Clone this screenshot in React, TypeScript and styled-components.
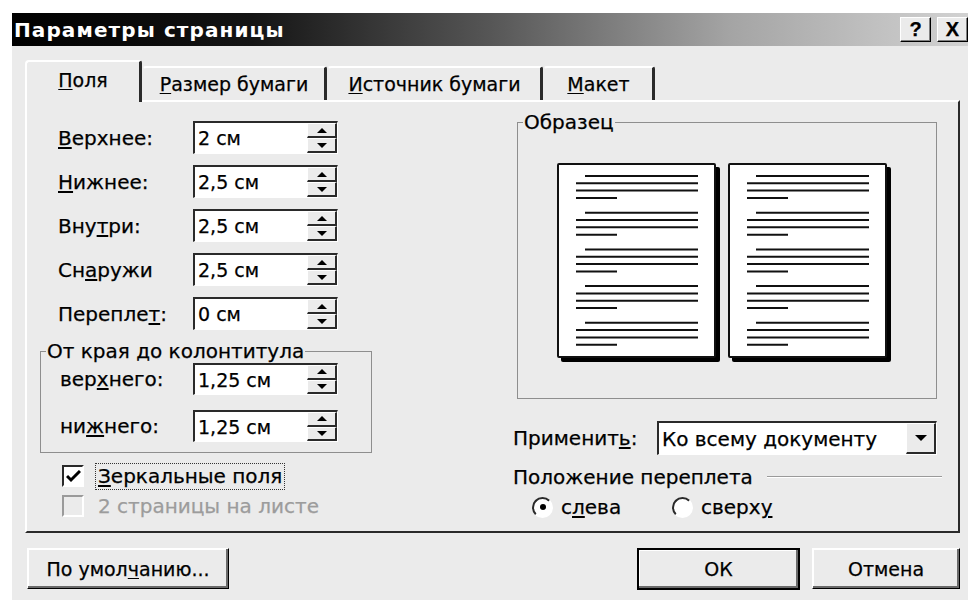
import React from "react";
import styled, { createGlobalStyle } from "styled-components";

const GlobalStyle = createGlobalStyle`
  html, body {
    margin: 0;
    padding: 0;
    background: #fff;
  }
  body {
    font-family: "DejaVu Sans", "Liberation Sans", sans-serif;
    color: #000;
    -webkit-text-stroke: 0.25px currentColor;
  }
  * {
    box-sizing: border-box;
  }
`;

const FACE = "#ebebeb";
const DARK = "#2a2a2a";

// one paragraph = 4 lines: indented first line, two full, one short
const paragraphs = [0, 1, 2, 3, 4];

function PageSheet() {
  return (
    <Page>
      <svg width="155" height="191" viewBox="0 0 155 191">
        {paragraphs.map((p) => {
          const y = 11 + p * 36.7;
          return (
            <g key={p} stroke="#111" strokeWidth="2">
              <line x1="26" y1={y} x2="139" y2={y} />
              <line x1="17" y1={y + 7.3} x2="139" y2={y + 7.3} />
              <line x1="17" y1={y + 14.6} x2="139" y2={y + 14.6} />
              <line x1="17" y1={y + 22} x2="58" y2={y + 22} />
            </g>
          );
        })}
      </svg>
    </Page>
  );
}

function Spin({ value, height = 33 }: { value: string; height?: number }) {
  return (
    <SpinBox style={{ height }}>
      <SpinValue>{value}</SpinValue>
      <SpinButtons>
        <SpinBtn>
          <ArrowUp />
        </SpinBtn>
        <SpinBtn>
          <ArrowDown />
        </SpinBtn>
      </SpinButtons>
    </SpinBox>
  );
}

function Field({ label, value }: { label: React.ReactNode; value: string }) {
  return (
    <Row>
      <Label>{label}</Label>
      <Spin value={value} />
    </Row>
  );
}

export default function App() {
  return (
    <>
      <GlobalStyle />
      <Window>
        <TitleBar>
          <Title>Параметры страницы</Title>
          <CaptionButtons>
            <CaptionButton>?</CaptionButton>
            <CaptionButton>X</CaptionButton>
          </CaptionButtons>
        </TitleBar>

        <Body>
          <Tabs>
            <Tab $active $width={117}>
              <U>П</U>оля
            </Tab>
            <Tab $width={185}>
              <U>Р</U>азмер бумаги
            </Tab>
            <Tab $width={216}>
              <U>И</U>сточник бумаги
            </Tab>
            <Tab $width={112}>
              <U>М</U>акет
            </Tab>
          </Tabs>

          <Panel>
            <LeftCol>
              <FieldList>
                <Field label={<><U>В</U>ерхнее:</>} value="2 см" />
                <Field label={<><U>Н</U>ижнее:</>} value="2,5 см" />
                <Field label={<>Вну<U>т</U>ри:</>} value="2,5 см" />
                <Field label={<>Сн<U>а</U>ружи</>} value="2,5 см" />
                <Field label={<>Перепле<U>т</U>:</>} value="0 см" />
              </FieldList>

              <Group>
                <Legend>От края до колонтитула</Legend>
                <GroupRows>
                  <GroupRow>
                    <Label $width={133}>
                      вер<U>х</U>него:
                    </Label>
                    <Spin value="1,25 см" height={32} />
                  </GroupRow>
                  <GroupRow>
                    <Label $width={133}>
                      ни<U>ж</U>него:
                    </Label>
                    <Spin value="1,25 см" height={32} />
                  </GroupRow>
                </GroupRows>
              </Group>

              <Checks>
                <CheckRow>
                  <CheckBox>
                    <svg width="15" height="13" viewBox="0 0 15 13">
                      <path d="M1 6 L5 10 L14 1" fill="none" stroke="#000" strokeWidth="3" />
                    </svg>
                  </CheckBox>
                  <FocusLabel>
                    <U>З</U>еркальные поля
                  </FocusLabel>
                </CheckRow>
                <CheckRow $disabled>
                  <CheckBox $disabled />
                  <CheckText>2 страницы на листе</CheckText>
                </CheckRow>
              </Checks>
            </LeftCol>

            <RightCol>
              <SampleGroup>
                <Legend>Образец</Legend>
                <Pages>
                  <PageSheet />
                  <PageSheet />
                </Pages>
              </SampleGroup>

              <ApplyRow>
                <Label $width={144}>
                  Применит<U>ь</U>:
                </Label>
                <Combo>
                  <ComboText>Ко всему документу</ComboText>
                  <ComboButton>
                    <ArrowDown $size={6} />
                  </ComboButton>
                </Combo>
              </ApplyRow>

              <SectionHead>
                <span>Положение переплета</span>
                <Rule />
              </SectionHead>

              <Radios>
                <RadioItem $width={140}>
                  <Radio $checked />
                  <span>
                    с<U>л</U>ева
                  </span>
                </RadioItem>
                <RadioItem>
                  <Radio />
                  <span>
                    сверх<U>у</U>
                  </span>
                </RadioItem>
              </Radios>
            </RightCol>
          </Panel>

          <Footer>
            <Button $width={202}>
              По умол<U>ч</U>анию...
            </Button>
            <Spacer />
            <Button $width={163} $default>
              ОК
            </Button>
            <Button $width={148}>Отмена</Button>
          </Footer>
        </Body>
      </Window>
    </>
  );
}

// Styled Components
const Window = styled.div`
  margin: 13px 0 0 12px;
  width: 956px;
  height: 587px;
  background: ${FACE};
  display: flex;
  flex-direction: column;
  overflow: hidden;
`;

const TitleBar = styled.div`
  height: 33px;
  flex: none;
  display: flex;
  align-items: center;
  justify-content: space-between;
  padding-left: 2px;
  background: linear-gradient(to right, #000 0%, #141414 25%, #565656 50%, #a4a4a4 75%, #d2d2d2 100%);
`;

const Title = styled.span`
  color: #fff;
  font-weight: bold;
  font-size: 20px;
  letter-spacing: 1.1px;
  -webkit-text-stroke: 0;
`;

const CaptionButtons = styled.div`
  display: flex;
  gap: 6px;
`;

const CaptionButton = styled.div`
  width: 31px;
  height: 25px;
  background: ${FACE};
  border: 1px solid;
  border-color: #fff #000 #000 #fff;
  box-shadow: inset -1px -1px #808080;
  font-family: "Liberation Sans", sans-serif;
  font-weight: bold;
  font-size: 20px;
  line-height: 22px;
  text-align: center;
`;

const Body = styled.div`
  flex: 1;
  display: flex;
  flex-direction: column;
  padding: 14px 8px 0 13px;
`;

const Tabs = styled.div`
  display: flex;
  align-items: flex-end;
  height: 42px;
  margin-bottom: -2px;
  position: relative;
  z-index: 1;
`;

const Tab = styled.div<{ $active?: boolean; $width: number }>`
  width: ${(p) => p.$width}px;
  height: ${(p) => (p.$active ? 42 : 34)}px;
  margin-bottom: ${(p) => (p.$active ? 0 : 2)}px;
  padding-bottom: ${(p) => (p.$active ? 4 : 0)}px;
  display: flex;
  align-items: center;
  justify-content: center;
  background: ${FACE};
  border-top: 2px solid #fff;
  border-left: 2px solid ${(p) => (p.$active ? "#fff" : "transparent")};
  border-right: 3px solid ${DARK};
  border-radius: 4px 3px 0 0;
  font-size: 19px;
  white-space: nowrap;
`;

const U = styled.span`
  text-decoration: underline;
  text-underline-offset: 2px;
`;

const Panel = styled.div`
  height: 433px;
  border: 2px solid;
  border-color: #fff ${DARK} ${DARK} #fff;
  display: grid;
  grid-template-columns: 484px 1fr;
`;

const LeftCol = styled.div`
  padding: 19px 0 0 13px;
  display: flex;
  flex-direction: column;
`;

const FieldList = styled.div`
  display: flex;
  flex-direction: column;
  gap: 11px;
  padding-left: 18px;
`;

const Row = styled.div`
  display: flex;
  align-items: center;
`;

const Label = styled.div<{ $width?: number }>`
  width: ${(p) => p.$width ?? 135}px;
  flex: none;
  font-size: 20px;
  white-space: nowrap;
`;

const SpinBox = styled.div`
  width: 145px;
  display: flex;
  align-items: stretch;
  background: #fff;
  border-top: 2px solid ${DARK};
  border-left: 2px solid ${DARK};
  border-right: 1px solid #fff;
  border-bottom: 1px solid #fff;
`;

const SpinValue = styled.div`
  flex: 1;
  padding-left: 3px;
  display: flex;
  align-items: center;
  font-size: 19px;
  white-space: nowrap;
`;

const SpinButtons = styled.div`
  width: 30px;
  display: flex;
  flex-direction: column;
`;

const SpinBtn = styled.div`
  flex: 1;
  display: flex;
  align-items: center;
  justify-content: center;
  background: ${FACE};
  border: 1px solid;
  border-color: #fff ${DARK} ${DARK} #fff;
  border-bottom-width: 2px;
  border-right-width: 2px;
`;

const ArrowUp = styled.span`
  width: 0;
  height: 0;
  border-left: 5px solid transparent;
  border-right: 5px solid transparent;
  border-bottom: 5px solid #000;
`;

const ArrowDown = styled.span<{ $size?: number }>`
  width: 0;
  height: 0;
  border-left: ${(p) => p.$size ?? 5}px solid transparent;
  border-right: ${(p) => p.$size ?? 5}px solid transparent;
  border-top: ${(p) => p.$size ?? 5}px solid #000;
`;

const Group = styled.fieldset`
  margin: 10px 0 0 0;
  width: 332px;
  padding: 1px 0 10px 0;
  border: 1px solid #8e8e8e;
  min-width: 0;
`;

const Legend = styled.legend`
  font-size: 20px;
  line-height: 22px;
  padding: 0 1px;
  margin-left: 5px;
  white-space: nowrap;
`;

const GroupRows = styled.div`
  display: flex;
  flex-direction: column;
  gap: 15px;
  padding-left: 19px;
`;

const GroupRow = styled.div`
  display: flex;
  align-items: center;
`;

const Checks = styled.div`
  margin-top: 11px;
  padding-left: 22px;
  display: flex;
  flex-direction: column;
  gap: 6px;
`;

const CheckRow = styled.div<{ $disabled?: boolean }>`
  display: flex;
  align-items: center;
  height: 24px;
  gap: 11px;
  color: ${(p) => (p.$disabled ? "#9c9c9c" : "#000")};
`;

const CheckBox = styled.div<{ $disabled?: boolean }>`
  width: 22px;
  height: 22px;
  flex: none;
  display: flex;
  align-items: center;
  justify-content: center;
  background: ${(p) => (p.$disabled ? FACE : "#fff")};
  border: 2px solid;
  border-color: ${(p) => (p.$disabled ? "#9a9a9a" : DARK)} #fff #fff
    ${(p) => (p.$disabled ? "#9a9a9a" : DARK)};
`;

const FocusLabel = styled.span`
  font-size: 20px;
  padding: 0 2px;
  border: 1px dotted #333;
  line-height: 25px;
`;

const CheckText = styled.span`
  font-size: 20px;
  padding: 0 3px;
`;

const RightCol = styled.div`
  display: flex;
  flex-direction: column;
  padding: 9px 21px 0 0;
`;

const SampleGroup = styled.fieldset`
  margin: 0 0 0 6px;
  height: 288px;
  padding: 30px 0 0 0;
  border: 1px solid #8e8e8e;
  min-width: 0;
`;

const Pages = styled.div`
  display: flex;
  justify-content: center;
  gap: 12px;
  padding-right: 10px;
`;

const Page = styled.div`
  width: 159px;
  height: 195px;
  background: #fff;
  border: 2px solid #111;
  border-radius: 2px;
  box-shadow: 4px 4px 0 #000;
  svg {
    display: block;
  }
`;

const ApplyRow = styled.div`
  display: flex;
  align-items: center;
  margin-top: 22px;
  padding-left: 2px;
`;

const Combo = styled.div`
  width: 280px;
  height: 34px;
  display: flex;
  background: #fff;
  border-top: 2px solid ${DARK};
  border-left: 2px solid ${DARK};
  border-right: 1px solid #fff;
  border-bottom: 1px solid #fff;
`;

const ComboText = styled.div`
  flex: 1;
  display: flex;
  align-items: center;
  padding-left: 3px;
  font-size: 20px;
  white-space: nowrap;
`;

const ComboButton = styled.div`
  width: 30px;
  display: flex;
  align-items: center;
  justify-content: center;
  background: ${FACE};
  border: 1px solid;
  border-color: #fff ${DARK} ${DARK} #fff;
  border-right-width: 2px;
  border-bottom-width: 2px;
`;

const SectionHead = styled.div`
  display: flex;
  align-items: center;
  gap: 14px;
  margin-top: 11px;
  padding-left: 2px;
  font-size: 20px;
  line-height: 22px;
  white-space: nowrap;
`;

const Rule = styled.div`
  flex: 1;
  height: 2px;
  border-top: 1px solid #9a9a9a;
  border-bottom: 1px solid #fff;
  margin-right: -5px;
`;

const Radios = styled.div`
  display: flex;
  margin-top: 8px;
  padding-left: 21px;
  font-size: 20px;
  line-height: 22px;
`;

const RadioItem = styled.div<{ $width?: number }>`
  display: flex;
  align-items: center;
  gap: 8px;
  width: ${(p) => (p.$width ? `${p.$width}px` : "auto")};
`;

const Radio = styled.span<{ $checked?: boolean }>`
  width: 21px;
  height: 21px;
  flex: none;
  border-radius: 50%;
  background: #fff;
  border: 2px solid;
  border-color: ${DARK} #fff #fff ${DARK};
  display: flex;
  align-items: center;
  justify-content: center;

  &::after {
    content: "";
    width: 6px;
    height: 6px;
    border-radius: 50%;
    background: ${(p) => (p.$checked ? "#000" : "transparent")};
  }
`;

const Footer = styled.div`
  display: flex;
  align-items: flex-start;
  gap: 12px;
  margin-top: 15px;
  padding-left: 2px;
`;

const Spacer = styled.div`
  flex: 1;
`;

const Button = styled.div<{ $width: number; $default?: boolean }>`
  width: ${(p) => p.$width}px;
  height: ${(p) => (p.$default ? 42 : 41)}px;
  display: flex;
  align-items: center;
  justify-content: center;
  background: ${FACE};
  font-size: 19px;
  white-space: nowrap;
  border: ${(p) => (p.$default ? 2 : 1)}px solid;
  border-color: ${(p) => (p.$default ? "#000" : "#fff #000 #000 #fff")};
  box-shadow: inset -2px -2px #6a6a6a, inset 1px 1px #fff;
`;
